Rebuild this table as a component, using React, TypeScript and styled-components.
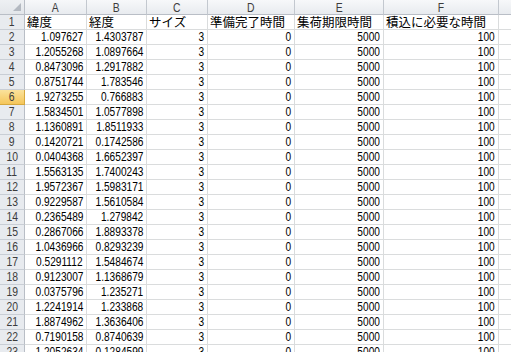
import styled, { createGlobalStyle } from "styled-components";

const GlobalStyle = createGlobalStyle`
  html, body {
    margin: 0;
    padding: 0;
    background: #ffffff;
    overflow: hidden;
  }
`;

const COLS = ["A", "B", "C", "D", "E", "F", ""];

const HEADERS = [
  "緯度",
  "経度",
  "サイズ",
  "準備完了時間",
  "集荷期限時間",
  "積込に必要な時間",
];

const COORDS: [string, string][] = [
  ["1.097627", "1.4303787"],
  ["1.2055268", "1.0897664"],
  ["0.8473096", "1.2917882"],
  ["0.8751744", "1.783546"],
  ["1.9273255", "0.766883"],
  ["1.5834501", "1.0577898"],
  ["1.1360891", "1.8511933"],
  ["0.1420721", "0.1742586"],
  ["0.0404368", "1.6652397"],
  ["1.5563135", "1.7400243"],
  ["1.9572367", "1.5983171"],
  ["0.9229587", "1.5610584"],
  ["0.2365489", "1.279842"],
  ["0.2867066", "1.8893378"],
  ["1.0436966", "0.8293239"],
  ["0.5291112", "1.5484674"],
  ["0.9123007", "1.1368679"],
  ["0.0375796", "1.235271"],
  ["1.2241914", "1.233868"],
  ["1.8874962", "1.3636406"],
  ["0.7190158", "0.8740639"],
  ["1.2052634", "0.1284599"],
];

const ACTIVE_ROW = 6;

const Sheet = styled.div`
  display: grid;
  grid-template-columns: 25px 62px 60px 61px 87px 89px 115px 40px;
  grid-auto-rows: 15px;
  width: 511px;
  height: 352px;
  overflow: hidden;
  font-family: "Liberation Sans", "Noto Sans CJK JP", sans-serif;
  font-size: 13px;
  color: #000;
`;

const Corner = styled.div`
  position: relative;
  box-sizing: border-box;
  background: linear-gradient(#eef0f3, #e3e6ea);
  border-right: 1px solid #b9bec6;
  border-bottom: 1px solid #b9bec6;

  &::after {
    content: "";
    position: absolute;
    right: 3px;
    bottom: 3px;
    border-left: 8px solid transparent;
    border-bottom: 8px solid #b4b9c1;
  }
`;

const ColHead = styled.div`
  box-sizing: border-box;
  display: flex;
  align-items: center;
  justify-content: center;
  background: linear-gradient(#f7f8fa, #e8ebef);
  border-right: 1px solid #c3c8cf;
  border-bottom: 1px solid #b9bec6;
  color: #3c3c3c;
  line-height: 13px;
  overflow: hidden;
`;

const RowHead = styled.div<{ $active?: boolean }>`
  box-sizing: border-box;
  display: flex;
  align-items: flex-end;
  justify-content: center;
  padding-bottom: 1px;
  background: ${(p) =>
    p.$active ? "linear-gradient(#fae29c, #f5c65a)" : "#e8ebef"};
  border-right: 1px solid ${(p) => (p.$active ? "#d6a83e" : "#b9bec6")};
  border-bottom: 1px solid ${(p) => (p.$active ? "#d6a83e" : "#c9ced5")};
  color: #3c3c3c;
  line-height: 13px;
`;

const Cell = styled.div<{ $align?: "left" | "right" }>`
  box-sizing: border-box;
  display: flex;
  align-items: flex-end;
  justify-content: ${(p) => (p.$align === "left" ? "flex-start" : "flex-end")};
  padding: ${(p) => (p.$align === "left" ? "0 0 1px 2px" : "0 3px 1px 0")};
  border-right: 1px solid #dadcdd;
  border-bottom: 1px solid #dadcdd;
  white-space: nowrap;
  line-height: 13px;
`;

const Num = styled.span`
  display: inline-block;
  transform: scaleX(0.78);
  transform-origin: right center;
`;

const Label = styled.span`
  display: inline-block;
  transform: scaleX(0.8);
  transform-origin: center;
`;

const Text = styled.span`
  font-family: "Noto Sans CJK JP", sans-serif;
  font-size: 12.5px;
  line-height: 13px;
`;

export default function App() {
  return (
    <>
      <GlobalStyle />
      <Sheet>
        <Corner />
        {COLS.map((c, i) => (
          <ColHead key={"h" + i}>
            <Label>{c}</Label>
          </ColHead>
        ))}

        <RowHead>
          <Label>1</Label>
        </RowHead>
        {HEADERS.map((h) => (
          <Cell key={h} $align="left">
            <Text>{h}</Text>
          </Cell>
        ))}
        <Cell />

        {COORDS.map(([lat, lng], i) => {
          const row = i + 2;
          return [
            <RowHead key={"r" + row} $active={row === ACTIVE_ROW}>
              <Label>{row}</Label>
            </RowHead>,
            <Cell key={"a" + row}>
              <Num>{lat}</Num>
            </Cell>,
            <Cell key={"b" + row}>
              <Num>{lng}</Num>
            </Cell>,
            <Cell key={"c" + row}>
              <Num>3</Num>
            </Cell>,
            <Cell key={"d" + row}>
              <Num>0</Num>
            </Cell>,
            <Cell key={"e" + row}>
              <Num>5000</Num>
            </Cell>,
            <Cell key={"f" + row}>
              <Num>100</Num>
            </Cell>,
            <Cell key={"g" + row} />,
          ];
        })}
      </Sheet>
    </>
  );
}
